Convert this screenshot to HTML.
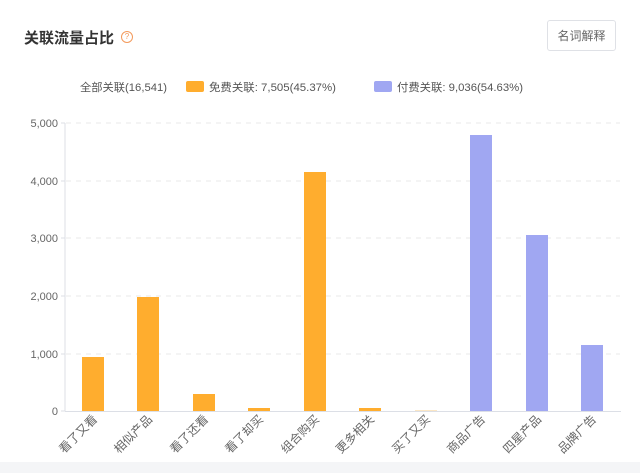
<html><head><style>body{margin:0;width:640px;height:473px;background:#fff;font-family:"Liberation Sans","Noto Sans CJK SC",sans-serif;position:relative;overflow:hidden}
.t{position:absolute;left:24px;top:27px;font-size:15px;font-weight:bold;color:#333}
.q{position:absolute;left:121px;top:31px;width:10px;height:10px;border:1px solid #f39a5c;border-radius:50%;font-size:8px;color:#f39a5c;text-align:center;line-height:10px}
.b{position:absolute;left:547px;top:20px;width:69px;height:31px;border:1px solid #dfe1e6;border-radius:3px;font-size:12px;color:#666;text-align:center;line-height:30px;box-sizing:border-box}
.f{position:absolute;left:0;top:462px;width:640px;height:11px;background:#f4f5f7}</style></head><body>
<div class="t">关联流量占比</div><div class="q">?</div><div class="b">名词解释</div>
<svg width="640" height="462" style="position:absolute;left:0;top:0" font-family="Liberation Sans,Noto Sans CJK SC,sans-serif">
<g font-size="11" fill="#555"><text x="80" y="91" textLength="87" lengthAdjust="spacingAndGlyphs">全部关联(16,541)</text>
<rect x="186" y="81" width="18" height="11" rx="2" fill="#ffad2e"/><text x="209" y="91" textLength="127" lengthAdjust="spacingAndGlyphs">免费关联: 7,505(45.37%)</text>
<rect x="374" y="81" width="18" height="11" rx="2" fill="#a0a7f2"/><text x="397" y="91" textLength="126" lengthAdjust="spacingAndGlyphs">付费关联: 9,036(54.63%)</text></g>
<g stroke="#e8e8e8" stroke-dasharray="5,5"><line x1="66" x2="620" y1="123" y2="123"/><line x1="66" x2="620" y1="181" y2="181"/><line x1="66" x2="620" y1="238" y2="238"/><line x1="66" x2="620" y1="296" y2="296"/><line x1="66" x2="620" y1="354" y2="354"/></g>
<g stroke="#dcdfe6"><line x1="65" x2="65" y1="123" y2="411"/><line x1="65" x2="621" y1="411.5" y2="411.5"/>
<line x1="61" x2="65" y1="123" y2="123"/><line x1="61" x2="65" y1="181" y2="181"/><line x1="61" x2="65" y1="238" y2="238"/><line x1="61" x2="65" y1="296" y2="296"/><line x1="61" x2="65" y1="354" y2="354"/><line x1="61" x2="65" y1="411" y2="411"/></g>
<g font-size="11" fill="#666" text-anchor="end"><text x="58" y="127">5,000</text><text x="58" y="185">4,000</text><text x="58" y="242">3,000</text><text x="58" y="300">2,000</text><text x="58" y="358">1,000</text><text x="58" y="415">0</text></g>
<g fill="#ffad2e"><rect x="82" y="357" width="22" height="54"/><rect x="137" y="297" width="22" height="114"/><rect x="193" y="394" width="22" height="17"/><rect x="248" y="408" width="22" height="3"/><rect x="304" y="172" width="22" height="239"/><rect x="359" y="408" width="22" height="3"/><rect x="415" y="410" width="22" height="1" fill="#fbe6c4"/></g>
<g fill="#a0a7f2"><rect x="470" y="135" width="22" height="276"/><rect x="526" y="235" width="22" height="176"/><rect x="581" y="345" width="22" height="66"/></g>
<g font-size="12" fill="#666" text-anchor="end">
<text transform="translate(98,420) rotate(-45)">看了又看</text><text transform="translate(153,420) rotate(-45)">相似产品</text><text transform="translate(209,420) rotate(-45)">看了还看</text><text transform="translate(264,420) rotate(-45)">看了却买</text><text transform="translate(320,420) rotate(-45)">组合购买</text><text transform="translate(375,420) rotate(-45)">更多相关</text><text transform="translate(431,420) rotate(-45)">买了又买</text><text transform="translate(486,420) rotate(-45)">商品广告</text><text transform="translate(542,420) rotate(-45)">四星产品</text><text transform="translate(597,420) rotate(-45)">品牌广告</text></g>
</svg><div class="f"></div></body></html>
